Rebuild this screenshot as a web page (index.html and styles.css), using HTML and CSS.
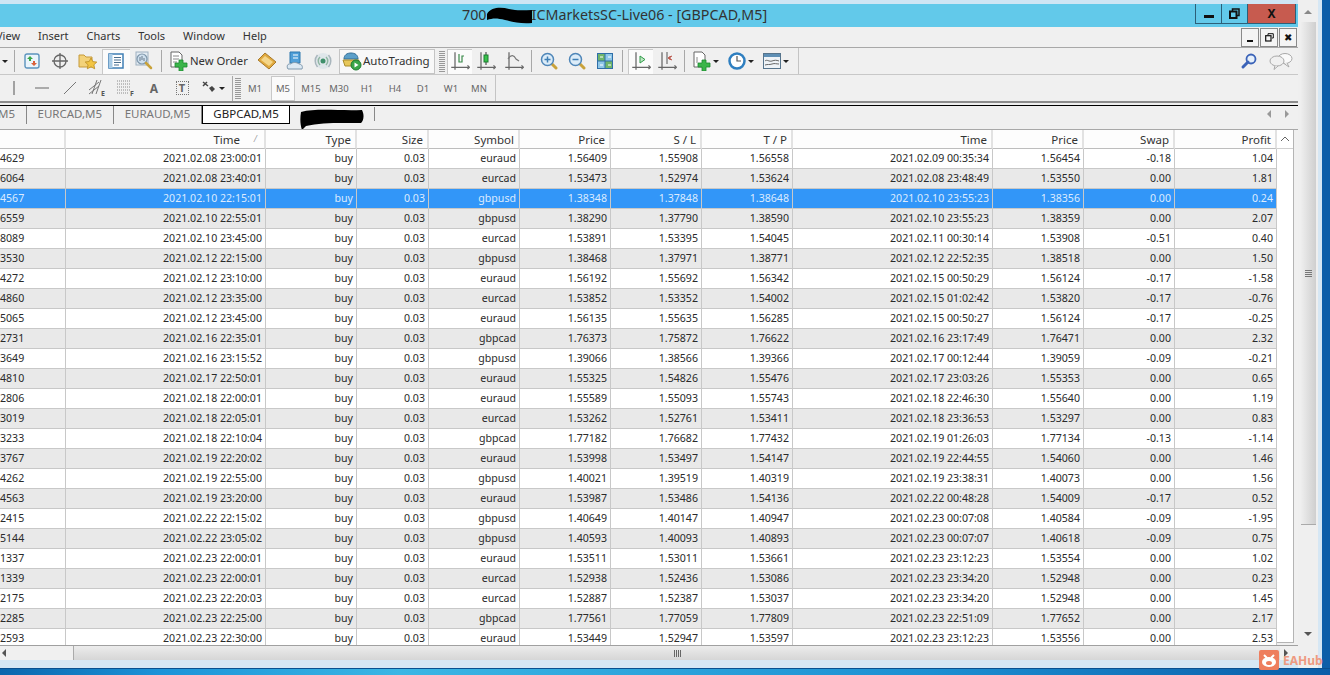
FILE: index.html
```html
<!DOCTYPE html>
<html>
<head>
    <meta charset="utf-8">
    <title>MetaTrader - GBPCAD,M5</title>
    <link rel="stylesheet" href="styles.css">
</head>

<body>
    <svg class="defs" width="0" height="0">
        <symbol id="axis" viewBox="0 0 16 16">
            <path d="M4 1v14M1 13h14" fill="none" stroke="#666" stroke-width="1"/>
            <path d="M14 11.500l1.500 1.500-1.500 1.500" fill="none" stroke="#666"/>
        </symbol>
        <symbol id="lens" viewBox="0 0 18 18">
            <path d="M11 11l5 5" stroke="#c9a23a" stroke-width="3" stroke-linecap="round"/>
            <circle cx="7.500" cy="7.500" r="6" fill="#dcecf8" stroke="#4f86b8" stroke-width="1.500"/>
        </symbol>
    </svg>

    <div class="screen">
        <div class="app">
            <div class="strip"></div>

            <div class="titlebar">
                <span class="title-text">700<svg class="title-blob" viewBox="0 0 45 18" width="45" height="18"><path d="M0 8C4 1 14 1 22 3S38 4 45 4V17C34 18 26 16 18 14S6 12 0 14Z" fill="#000"/></svg>ICMarketsSC-Live06 - [GBPCAD,M5]</span>
                <div class="winbtns">
                    <div class="winbtn"><i class="bar"></i></div>
                    <div class="winbtn"><svg width="11" height="11" viewBox="0 0 11 11"><path d="M3.500 3V1h6.500v6.500H8" fill="none" stroke="#111" stroke-width="1.500"/><rect x="1" y="3.500" width="6.500" height="6.500" fill="none" stroke="#111" stroke-width="2"/></svg></div>
                    <div class="winbtn winbtn--close">X</div>
                </div>
            </div>

            <div class="menu">
                <span class="menu__item menu__item--view">View</span>
                <span class="menu__item">Insert</span>
                <span class="menu__item">Charts</span>
                <span class="menu__item">Tools</span>
                <span class="menu__item">Window</span>
                <span class="menu__item">Help</span>
                <div class="mdi">
                    <div class="mdi__btn"><i class="mdi__min"></i></div>
                    <div class="mdi__btn"><svg width="9" height="9" viewBox="0 0 9 9"><path d="M3 2V.7h5.300V5H7" fill="none" stroke="#111"/><rect x=".7" y="2.700" width="5.300" height="5.300" fill="none" stroke="#111" stroke-width="1.200"/></svg></div>
                    <div class="mdi__btn mdi__btn--x">✖</div>
                </div>
            </div>

            <div class="toolbar">
                <i class="arrow arrow--first"></i>
                <i class="sep"></i>
                <div class="tool"><svg width="16" height="16" viewBox="0 0 16 16"><rect x="1" y="1" width="14" height="14" rx="2" fill="#eaf4fb" stroke="#5b93bd" stroke-width="1.400"/><path d="M6 3l3 3H7v2H5V6H3z" fill="#3aa648"/><path d="M10 13l-3-3h2V8h2v2h2z" fill="#d9613a"/></svg></div>
                <div class="tool"><svg width="20" height="20" viewBox="0 0 20 20"><circle cx="10" cy="10" r="6" fill="none" stroke="#666" stroke-width="1.300"/><path d="M10 2v16M2 10h16" stroke="#666" stroke-width="1.300"/></svg></div>
                <div class="tool"><svg width="20" height="18" viewBox="0 0 20 18"><path d="M1 3h5l2 2h6v10H1z" fill="#f3d27a" stroke="#c69a3a"/><path d="M13 6l1.800 3.600 4 .5-2.900 2.700.8 4-3.700-2-3.700 2 .8-4L7.200 10l4-.5z" fill="#f2c544" stroke="#b98a22" stroke-width=".8"/></svg></div>
                <div class="tool tool--on"><svg width="16" height="16" viewBox="0 0 16 16"><rect x="1" y="1" width="14" height="14" fill="#fff" stroke="#3f7fb5" stroke-width="1.500"/><path d="M1 1h3.500v14H1z" fill="#a8cbe6"/><path d="M6 4.500h7M6 7h7M6 9.500h7M6 12h5" stroke="#4a6f8f"/></svg></div>
                <div class="tool"><svg width="20" height="20" viewBox="0 0 20 20"><rect x="2" y="1" width="12" height="13" fill="#e3ebf2" stroke="#9db0c0"/><circle cx="8" cy="8" r="5" fill="#cfe0ee" stroke="#7f97ab" stroke-width="1.200"/><path d="M6 10V6M8 9V5M10 10V7" stroke="#66788a"/><path d="M12 12l5 5" stroke="#c9a23a" stroke-width="2.500" stroke-linecap="round"/></svg></div>
                <i class="sep"></i>
                <div class="order"><svg width="18" height="20" viewBox="0 0 18 20"><path d="M1 1h8l3 3v12H1z" fill="#fff" stroke="#666"/><path d="M3 5h6M3 8h6M3 11h4" stroke="#888"/><path d="M9 9h4v3h4v4h-4v4H9v-4H5v-4h4z" fill="#3bb54a" stroke="#1d8a30" stroke-width=".8"/></svg><span class="tool-label">New Order</span></div>
                <div class="tool"><svg width="20" height="18" viewBox="0 0 20 18"><path d="M1 8l7-7 11 9-7 7z" fill="#e0a93e" stroke="#a8792a"/><path d="M4 8l4-4 8 6-4 4z" fill="#f4d68a"/></svg></div>
                <div class="tool"><svg width="18" height="20" viewBox="0 0 18 20"><path d="M4 1h10v11H4z" fill="#4f9fd8" stroke="#2f78ae"/><path d="M7 4h5M7 7h5" stroke="#fff"/><path d="M2 18c-2-3 0-6 3-5 1-2 6-2 8 0 3 0 4 3 3 5z" fill="#dce9f3" stroke="#7f98ad"/></svg></div>
                <div class="tool"><svg width="18" height="18" viewBox="0 0 18 18"><circle cx="9" cy="9" r="8" fill="#dfe6ea"/><circle cx="9" cy="9" r="2.500" fill="#3f8f6a"/><path d="M6 5a5.500 5.500 0 0 0 0 8M12 5a5.500 5.500 0 0 1 0 8" fill="none" stroke="#8fb6a2" stroke-width="1.500"/><path d="M3.500 3a9 9 0 0 0 0 12M14.500 3a9 9 0 0 1 0 12" fill="none" stroke="#a9b6bd" stroke-width="1.500"/></svg></div>
                <div class="auto"><svg width="20" height="20" viewBox="0 0 20 20"><path d="M2 8c0-4 3-6 7-6s7 2 7 6z" fill="#5b9fc9" stroke="#366f96"/><path d="M1 9h16l-2 6H3z" fill="#e7c75a" stroke="#a98c2c"/><circle cx="14" cy="14" r="5" fill="#3aa648" stroke="#1d7a30"/><path d="M12.500 11.500l4 2.500-4 2.500z" fill="#fff"/></svg><span class="tool-label">AutoTrading</span></div>
                <i class="grip"></i>
                <div class="tool tool--on tool--chart"><svg width="20" height="20"><use href="#axis"/><path d="M9 3v8h3V5h2" fill="none" stroke="#3a8a4a" stroke-width="1.200"/></svg></div>
                <div class="tool"><svg width="20" height="20"><use href="#axis"/><path d="M10 1v13" stroke="#333"/><rect x="8" y="4" width="4" height="7" fill="#37c24a" stroke="#1d7a30"/></svg></div>
                <div class="tool"><svg width="20" height="20"><use href="#axis"/><path d="M4 8c3-5 6-4 8 0l3 2" fill="none" stroke="#777" stroke-width="1.200"/></svg></div>
                <i class="sep"></i>
                <div class="tool"><svg width="18" height="18"><use href="#lens"/><path d="M4.500 7.500h6M7.500 4.500v6" stroke="#3f7fb5" stroke-width="1.500"/></svg></div>
                <div class="tool"><svg width="18" height="18"><use href="#lens"/><path d="M4.500 7.500h6" stroke="#3f7fb5" stroke-width="1.500"/></svg></div>
                <div class="tool"><svg width="16" height="16" viewBox="0 0 16 16"><rect x="0" y="0" width="16" height="16" fill="#2f6ea8"/><rect x="1" y="1" width="6.500" height="6.500" fill="#6fb56a"/><rect x="8.500" y="1" width="6.500" height="6.500" fill="#8fc7e8"/><rect x="1" y="8.500" width="6.500" height="6.500" fill="#8fc7e8"/><rect x="8.500" y="8.500" width="6.500" height="6.500" fill="#6fb56a"/><path d="M3 4h3M11 4h3M3 12h3M11 12h3" stroke="#fff"/></svg></div>
                <i class="sep"></i>
                <div class="tool tool--on tool--chart"><svg width="20" height="20"><use href="#axis"/><path d="M9 5l5 3.500-5 3.500z" fill="#bfe8c4" stroke="#2f9a48"/></svg></div>
                <div class="tool"><svg width="20" height="20"><use href="#axis"/><path d="M10 1v12" stroke="#555"/><path d="M11 7l4-2M11 7l4 2M13 5v4" stroke="#b5473a"/></svg></div>
                <i class="sep"></i>
                <div class="tool tool--drop"><svg width="18" height="20" viewBox="0 0 18 20"><path d="M1 1h8l3 3v12H1z" fill="#fff" stroke="#666"/><path d="M4 6v6" stroke="#888"/><path d="M9 9h4v3h4v4h-4v4H9v-4H5v-4h4z" fill="#3bb54a" stroke="#1d8a30" stroke-width=".8"/></svg><i class="arrow"></i></div>
                <div class="tool tool--drop"><svg width="18" height="18" viewBox="0 0 18 18"><circle cx="9" cy="9" r="7.500" fill="#fff" stroke="#2f7fc0" stroke-width="2.500"/><path d="M9 4v5h4" fill="none" stroke="#555" stroke-width="1.200"/></svg><i class="arrow"></i></div>
                <div class="tool tool--drop"><svg width="18" height="16" viewBox="0 0 18 16"><rect x=".5" y=".5" width="17" height="15" fill="#eef3f7" stroke="#56748c"/><path d="M1 1h16v3H1z" fill="#5e8fb5"/><path d="M2 8c2-2 4 1 7 0s4-1 7 0M2 12c3-1 4 0 7-1s4 0 7 0" fill="none" stroke="#666"/></svg><i class="arrow"></i></div>
                <div class="toolbar__end"></div>
                <div class="finder">
                    <svg width="18" height="18" viewBox="0 0 18 18"><circle cx="11" cy="7" r="4.500" fill="#e6f0fb" stroke="#3b63b8" stroke-width="1.800"/><path d="M8 10l-5 5" stroke="#3b63b8" stroke-width="3" stroke-linecap="round"/></svg>
                    <svg width="24" height="18" viewBox="0 0 24 18"><ellipse cx="16" cy="6.500" rx="7" ry="5" fill="#fafafa" stroke="#a8a8a8"/><path d="M18 11l2 4-5-3.500" fill="#fafafa" stroke="#a8a8a8"/><ellipse cx="8" cy="9" rx="7" ry="5" fill="#f0f0f0" stroke="#a8a8a8"/><path d="M6 13.500l-1 4 4-3.500" fill="#f0f0f0" stroke="#a8a8a8"/></svg>
                </div>
            </div>

            <div class="toolbar toolbar--second">
                <div class="toolbar__left">
                    <div class="tool"><svg width="6" height="14"><path d="M3 0v14" stroke="#555"/></svg></div>
                    <div class="tool"><svg width="14" height="4"><path d="M0 2h14" stroke="#666"/></svg></div>
                    <div class="tool"><svg width="14" height="14"><path d="M1 13L13 1" stroke="#777"/></svg></div>
                    <div class="tool"><svg width="20" height="18" viewBox="0 0 20 18"><path d="M1 11L11 3M1 15L11 7M4 15L9 1M8 15L13 1" fill="none" stroke="#777"/><text x="13" y="17" class="tool__sub">E</text></svg></div>
                    <div class="tool"><svg width="20" height="18" viewBox="0 0 20 18"><path d="M1 2h13M1 5h13M1 8h13M1 11h13M1 14h11" stroke="#8a8a8a" stroke-dasharray="1 1"/><text x="14" y="17" class="tool__sub">F</text></svg></div>
                    <div class="tool tool--letter">A</div>
                    <div class="tool"><div class="textbox">T</div></div>
                    <div class="tool tool--drop"><svg width="16" height="14" viewBox="0 0 16 14"><path d="M2 1l5 4M6 1L2 5" stroke="#444" stroke-width="1.500"/><path d="M8 7l3-2 3 3-3 3z" fill="#444"/></svg><i class="arrow"></i></div>
                    <i class="sep sep--tall"></i>
                    <i class="grip grip--second"></i>
                    <div class="tool period">M1</div>
                    <div class="tool period period--on">M5</div>
                    <div class="tool period">M15</div>
                    <div class="tool period">M30</div>
                    <div class="tool period">H1</div>
                    <div class="tool period">H4</div>
                    <div class="tool period">D1</div>
                    <div class="tool period">W1</div>
                    <div class="tool period">MN</div>
                </div>
            </div>

            <div class="tabs">
                <span class="tab tab--cut">M5</span>
                <span class="tab">EURCAD,M5</span>
                <span class="tab">EURAUD,M5</span>
                <span class="tab tab--on">GBPCAD,M5</span>
                <svg class="tab-blob" width="64" height="22" viewBox="0 0 64 22"><path d="M1 4C16 0 40 3 62 2c3 6 1 12-1 13C44 15 22 14 6 18L2 22C0 16 0 10 1 4Z" fill="#000"/></svg>
                <i class="tab-end"></i>
                <div class="tabs__nav"><i class="nav-left"></i><i class="nav-right"></i></div>
            </div>

            <div class="history">
                <table class="trades">
                    <colgroup>
                        <col class="c-ticket"><col class="c-time"><col class="c-num"><col class="c-size"><col class="c-num"><col class="c-num"><col class="c-num"><col class="c-num"><col class="c-time"><col class="c-num"><col class="c-num"><col class="c-profit">
                    </colgroup>
                    <thead>
                        <tr><th></th><th class="sorted">Time<i class="sort">⁄</i></th><th>Type</th><th>Size</th><th>Symbol</th><th>Price</th><th>S / L</th><th>T / P</th><th>Time</th><th>Price</th><th>Swap</th><th>Profit</th></tr>
                    </thead>
                    <tbody>
                        <tr><td>4629</td><td>2021.02.08 23:00:01</td><td>buy</td><td>0.03</td><td>euraud</td><td>1.56409</td><td>1.55908</td><td>1.56558</td><td>2021.02.09 00:35:34</td><td>1.56454</td><td>-0.18</td><td>1.04</td></tr>
                        <tr><td>6064</td><td>2021.02.08 23:40:01</td><td>buy</td><td>0.03</td><td>eurcad</td><td>1.53473</td><td>1.52974</td><td>1.53624</td><td>2021.02.08 23:48:49</td><td>1.53550</td><td>0.00</td><td>1.81</td></tr>
                        <tr class="selected"><td>4567</td><td>2021.02.10 22:15:01</td><td>buy</td><td>0.03</td><td>gbpusd</td><td>1.38348</td><td>1.37848</td><td>1.38648</td><td>2021.02.10 23:55:23</td><td>1.38356</td><td>0.00</td><td>0.24</td></tr>
                        <tr><td>6559</td><td>2021.02.10 22:55:01</td><td>buy</td><td>0.03</td><td>gbpusd</td><td>1.38290</td><td>1.37790</td><td>1.38590</td><td>2021.02.10 23:55:23</td><td>1.38359</td><td>0.00</td><td>2.07</td></tr>
                        <tr><td>8089</td><td>2021.02.10 23:45:00</td><td>buy</td><td>0.03</td><td>eurcad</td><td>1.53891</td><td>1.53395</td><td>1.54045</td><td>2021.02.11 00:30:14</td><td>1.53908</td><td>-0.51</td><td>0.40</td></tr>
                        <tr><td>3530</td><td>2021.02.12 22:15:00</td><td>buy</td><td>0.03</td><td>gbpusd</td><td>1.38468</td><td>1.37971</td><td>1.38771</td><td>2021.02.12 22:52:35</td><td>1.38518</td><td>0.00</td><td>1.50</td></tr>
                        <tr><td>4272</td><td>2021.02.12 23:10:00</td><td>buy</td><td>0.03</td><td>euraud</td><td>1.56192</td><td>1.55692</td><td>1.56342</td><td>2021.02.15 00:50:29</td><td>1.56124</td><td>-0.17</td><td>-1.58</td></tr>
                        <tr><td>4860</td><td>2021.02.12 23:35:00</td><td>buy</td><td>0.03</td><td>eurcad</td><td>1.53852</td><td>1.53352</td><td>1.54002</td><td>2021.02.15 01:02:42</td><td>1.53820</td><td>-0.17</td><td>-0.76</td></tr>
                        <tr><td>5065</td><td>2021.02.12 23:45:00</td><td>buy</td><td>0.03</td><td>euraud</td><td>1.56135</td><td>1.55635</td><td>1.56285</td><td>2021.02.15 00:50:27</td><td>1.56124</td><td>-0.17</td><td>-0.25</td></tr>
                        <tr><td>2731</td><td>2021.02.16 22:35:01</td><td>buy</td><td>0.03</td><td>gbpcad</td><td>1.76373</td><td>1.75872</td><td>1.76622</td><td>2021.02.16 23:17:49</td><td>1.76471</td><td>0.00</td><td>2.32</td></tr>
                        <tr><td>3649</td><td>2021.02.16 23:15:52</td><td>buy</td><td>0.03</td><td>gbpusd</td><td>1.39066</td><td>1.38566</td><td>1.39366</td><td>2021.02.17 00:12:44</td><td>1.39059</td><td>-0.09</td><td>-0.21</td></tr>
                        <tr><td>4810</td><td>2021.02.17 22:50:01</td><td>buy</td><td>0.03</td><td>euraud</td><td>1.55325</td><td>1.54826</td><td>1.55476</td><td>2021.02.17 23:03:26</td><td>1.55353</td><td>0.00</td><td>0.65</td></tr>
                        <tr><td>2806</td><td>2021.02.18 22:00:01</td><td>buy</td><td>0.03</td><td>euraud</td><td>1.55589</td><td>1.55093</td><td>1.55743</td><td>2021.02.18 22:46:30</td><td>1.55640</td><td>0.00</td><td>1.19</td></tr>
                        <tr><td>3019</td><td>2021.02.18 22:05:01</td><td>buy</td><td>0.03</td><td>eurcad</td><td>1.53262</td><td>1.52761</td><td>1.53411</td><td>2021.02.18 23:36:53</td><td>1.53297</td><td>0.00</td><td>0.83</td></tr>
                        <tr><td>3233</td><td>2021.02.18 22:10:04</td><td>buy</td><td>0.03</td><td>gbpcad</td><td>1.77182</td><td>1.76682</td><td>1.77432</td><td>2021.02.19 01:26:03</td><td>1.77134</td><td>-0.13</td><td>-1.14</td></tr>
                        <tr><td>3767</td><td>2021.02.19 22:20:02</td><td>buy</td><td>0.03</td><td>euraud</td><td>1.53998</td><td>1.53497</td><td>1.54147</td><td>2021.02.19 22:44:55</td><td>1.54060</td><td>0.00</td><td>1.46</td></tr>
                        <tr><td>4262</td><td>2021.02.19 22:55:00</td><td>buy</td><td>0.03</td><td>gbpusd</td><td>1.40021</td><td>1.39519</td><td>1.40319</td><td>2021.02.19 23:38:31</td><td>1.40073</td><td>0.00</td><td>1.56</td></tr>
                        <tr><td>4563</td><td>2021.02.19 23:20:00</td><td>buy</td><td>0.03</td><td>euraud</td><td>1.53987</td><td>1.53486</td><td>1.54136</td><td>2021.02.22 00:48:28</td><td>1.54009</td><td>-0.17</td><td>0.52</td></tr>
                        <tr><td>2415</td><td>2021.02.22 22:15:02</td><td>buy</td><td>0.03</td><td>gbpusd</td><td>1.40649</td><td>1.40147</td><td>1.40947</td><td>2021.02.23 00:07:08</td><td>1.40584</td><td>-0.09</td><td>-1.95</td></tr>
                        <tr><td>5144</td><td>2021.02.22 23:05:02</td><td>buy</td><td>0.03</td><td>gbpusd</td><td>1.40593</td><td>1.40093</td><td>1.40893</td><td>2021.02.23 00:07:07</td><td>1.40618</td><td>-0.09</td><td>0.75</td></tr>
                        <tr><td>1337</td><td>2021.02.23 22:00:01</td><td>buy</td><td>0.03</td><td>euraud</td><td>1.53511</td><td>1.53011</td><td>1.53661</td><td>2021.02.23 23:12:23</td><td>1.53554</td><td>0.00</td><td>1.02</td></tr>
                        <tr><td>1339</td><td>2021.02.23 22:00:01</td><td>buy</td><td>0.03</td><td>eurcad</td><td>1.52938</td><td>1.52436</td><td>1.53086</td><td>2021.02.23 23:34:20</td><td>1.52948</td><td>0.00</td><td>0.23</td></tr>
                        <tr><td>2175</td><td>2021.02.23 22:20:03</td><td>buy</td><td>0.03</td><td>eurcad</td><td>1.52887</td><td>1.52387</td><td>1.53037</td><td>2021.02.23 23:34:20</td><td>1.52948</td><td>0.00</td><td>1.45</td></tr>
                        <tr><td>2285</td><td>2021.02.23 22:25:00</td><td>buy</td><td>0.03</td><td>gbpcad</td><td>1.77561</td><td>1.77059</td><td>1.77809</td><td>2021.02.23 22:51:09</td><td>1.77652</td><td>0.00</td><td>2.17</td></tr>
                        <tr><td>2593</td><td>2021.02.23 22:30:00</td><td>buy</td><td>0.03</td><td>euraud</td><td>1.53449</td><td>1.52947</td><td>1.53597</td><td>2021.02.23 23:12:23</td><td>1.53556</td><td>0.00</td><td>2.53</td></tr>
                    </tbody>
                </table>
                <div class="trades-side"><div class="trades-side__up"><svg width="10" height="6"><path d="M1 5l4-4 4 4" fill="none" stroke="#666"/></svg></div></div>
            </div>

            <div class="hscroll">
                <i class="nav-left nav-left--dark"></i>
                <div class="hscroll__thumb"><span class="hgrip"></span></div>
                <i class="nav-right nav-right--dark"></i>
            </div>
            <div class="app-foot"></div>
        </div>

        <div class="vscroll">
            <i class="vscroll__up"></i>
            <div class="vscroll__thumb"><span class="vgrip"></span></div>
            <i class="vscroll__down"></i>
        </div>
        <div class="edge"></div>
        <div class="edge edge--dark"></div>
    </div>
    <div class="desktop"></div>

    <div class="watermark">
        <svg width="20" height="20" viewBox="0 0 20 20"><rect width="20" height="20" rx="2" fill="#ee7e5e"/><ellipse cx="10" cy="12" rx="7" ry="5" fill="#fff"/><path d="M5 5l3 3M15 5l-3 3" stroke="#fff" stroke-width="2"/><ellipse cx="10" cy="13" rx="3" ry="2" fill="#ee7e5e"/></svg>
        <span>EAHub</span>
    </div>
</body>
</html>
```

FILE: styles.css
```css
* {
    box-sizing: border-box;
}

html, body {
    margin: 0;
    height: 675px;
    overflow: hidden;
}

body {
    position: relative;
    background-color: #f0f0f0;
    font-family: "Noto Sans", "Liberation Sans", sans-serif;
    font-size: 10.600px;
    color: #222;
}

i {
    display: block;
    font-style: normal;
}

.defs {
    position: absolute;
}

.screen {
    display: flex;
    height: 668px;
}

.desktop {
    height: 7px;
    border-top: 1px solid #0a4f8f;
    background: linear-gradient(90deg, #0b66ad, #1c93d8 12%, #3bb6e4 30%, #1c8fd2 70%, #0a5da8);
}

.app {
    width: 1298px;
    display: flex;
    flex-direction: column;
}

.strip {
    height: 4px;
    background-color: #cfe5f4;
}

/* title */
.titlebar {
    height: 23px;
    display: flex;
    background-color: #62c9ea;
}

.title-text {
    margin-left: 462px;
    font-size: 14.300px;
    line-height: 22px;
    color: #333;
    white-space: nowrap;
}

.title-blob {
    vertical-align: -4px;
}

.winbtns {
    margin-left: auto;
    margin-right: 2px;
    display: flex;
    height: 20px;
    border: 1px solid #2c5f78;
    border-top: 0;
}

.winbtn {
    width: 26px;
    display: flex;
    align-items: center;
    justify-content: center;
    border-right: 1px solid #2c5f78;
}

.winbtn--close {
    width: 47px;
    border-right: 0;
    background-color: #c75b4f;
    color: #111;
    font-weight: bold;
    font-size: 12px;
}

.bar {
    width: 10px;
    height: 3px;
    margin-top: 5px;
    background-color: #111;
}

/* menu */
.menu {
    height: 21px;
    display: flex;
    align-items: center;
    border-bottom: 1px solid #a8a8a8;
    font-size: 11px;
    color: #333;
}

.menu__item {
    margin-right: 18px;
    margin-top: -3px;
    white-space: nowrap;
}

.menu__item--view {
    margin-left: -4px;
}

.mdi {
    margin-left: auto;
    margin-right: 1px;
    display: flex;
    gap: 1px;
    height: 19px;
}

.mdi__btn {
    width: 18px;
    border: 1px solid #8a8a8a;
    display: flex;
    align-items: center;
    justify-content: center;
    background-color: #f4f4f4;
}

.mdi__btn--x {
    font-size: 10px;
    color: #111;
}

.mdi__min {
    width: 6px;
    height: 2px;
    margin-top: 7px;
    background-color: #111;
}

/* toolbars */
.toolbar {
    height: 27px;
    display: flex;
    align-items: center;
    border-bottom: 1px solid #c8c8c8;
}

.toolbar--second {
    height: 28px;
    border-bottom: 2px solid #8c8c8c;
    align-items: stretch;
}

.toolbar__left {
    width: 496px;
    display: flex;
    align-items: center;
    border-right: 1px solid #c4c4c4;
}

.toolbar__end {
    width: 1px;
    height: 26px;
    margin-left: 5px;
    background-color: #c4c4c4;
}

.tool-label {
    margin-top: -2px;
}

.tool {
    width: 28px;
    height: 25px;
    flex: none;
    display: flex;
    align-items: center;
    justify-content: center;
    color: #555;
}

.tool--on {
    background-color: #fbfbfb;
    box-shadow: inset 1px 1px 0 #c9c9c9;
}

.tool--chart {
    margin-left: 2px;
    width: 25px;
}

.tool--drop {
    width: 35px;
    gap: 2px;
    justify-content: flex-start;
    padding-left: 5px;
}

.tool--letter {
    font-size: 12px;
    font-weight: bold;
    color: #666;
}

.tool__sub {
    font-family: "Noto Sans", sans-serif;
    font-size: 7px;
    font-weight: bold;
    fill: #555;
}

.textbox {
    width: 13px;
    height: 14px;
    border: 1px dotted #777;
    font-weight: bold;
    font-size: 11px;
    line-height: 12px;
    text-align: center;
    color: #666;
}

.period {
    font-size: 9.500px;
    color: #666;
}

.period--on {
    width: 24px;
    margin: 0 2px;
    border: 1px solid #c8c8c8;
    background-color: #fafafa;
}

.sep {
    width: 1px;
    height: 22px;
    flex: none;
    margin: 0 3px;
    background-color: #a8a8a8;
}

.sep--tall {
    height: 25px;
    margin: 0 2px 0 1px;
}

.grip {
    width: 6px;
    height: 22px;
    flex: none;
    margin-left: 4px;
    background: repeating-linear-gradient(0deg, #999 0 1px, transparent 1px 2px);
}

.grip--second {
    margin-left: 0;
}

.arrow {
    width: 0;
    height: 0;
    flex: none;
    border-left: 3px solid transparent;
    border-right: 3px solid transparent;
    border-top: 3px solid #222;
}

.arrow--first {
    margin-left: 2px;
    margin-right: 3px;
}

.order {
    width: 88px;
    flex: none;
    display: flex;
    align-items: center;
    gap: 2px;
    padding-left: 5px;
    font-size: 11.300px;
    color: #333;
    white-space: nowrap;
}

.auto {
    width: 96px;
    height: 25px;
    flex: none;
    margin-left: 2px;
    display: flex;
    align-items: center;
    gap: 1px;
    padding-left: 2px;
    border: 1px solid #c4c4c4;
    background-color: #f8f8f8;
    font-size: 11.500px;
    color: #333;
    white-space: nowrap;
}

.finder {
    margin-left: auto;
    margin-right: 5px;
    display: flex;
    align-items: center;
    gap: 11px;
}

/* tabs */
.tabs {
    height: 24px;
    margin-top: 2px;
    display: flex;
    align-items: flex-start;
    border-top: 1px solid #000;
    font-size: 11.500px;
    color: #777;
}

.tab {
    height: 18px;
    line-height: 16px;
    padding: 0 11px 0 10.500px;
    white-space: nowrap;
    border-right: 1px solid #888;
}

.tab--cut {
    margin-left: -2px;
    padding: 0 11px 0 0;
}

.tab--on {
    padding: 0 10px;
    border: 1px solid #000;
    border-top: 0;
    background-color: #fff;
    color: #222;
}

.tab-blob {
    margin: 2px 0 0 10px;
    flex: none;
}

.tab-end {
    width: 1px;
    height: 14px;
    margin: 1px 0 0 10px;
    background-color: #888;
}

.tabs__nav {
    margin-left: auto;
    margin-right: 9px;
    margin-top: 4px;
    display: flex;
    gap: 14px;
}

.nav-left, .nav-right {
    width: 0;
    height: 0;
    border-top: 4px solid transparent;
    border-bottom: 4px solid transparent;
}

.nav-left {
    border-right: 4px solid #999;
}

.nav-right {
    border-left: 4px solid #999;
}

.nav-left--dark {
    border-right-color: #555;
    margin-left: 2px;
}

.nav-right--dark {
    border-left-color: #555;
    margin-left: 4px;
}

/* history table */
.history {
    height: 516px;
    display: flex;
    align-items: flex-start;
    border-top: 1px solid #a8a8a8;
    overflow: hidden;
    padding-right: 4px;
}

.trades {
    width: 1277px;
    flex: none;
    table-layout: fixed;
    border-collapse: separate;
    border-spacing: 0;
    background-color: #fff;
}

.c-ticket { width: 66px; }
.c-time { width: 200px; }
.c-num { width: 91px; }
.c-size { width: 72px; }
.c-profit { width: 102px; }

.trades th {
    height: 19px;
    padding: 0 4px 0 0;
    text-align: right;
    font-weight: normal;
    font-size: 11.500px;
    color: #333;
    background-color: #fdfdfd;
    border-right: 2px solid #e2e2e2;
    border-bottom: 1px solid #bdbdbd;
    white-space: nowrap;
    overflow: hidden;
}

.trades th.sorted {
    padding-right: 24px;
    position: relative;
}

.sort {
    position: absolute;
    right: 8px;
    top: 3px;
    font-size: 8px;
    color: #888;
}

.trades td {
    height: 20px;
    padding: 0 3px 1px 0;
    text-align: right;
    color: #2a2a2a;
    border-right: 1px solid #c8c8c8;
    border-bottom: 1px solid #c8c8c8;
    white-space: nowrap;
    overflow: hidden;
}

.trades td:first-child {
    text-align: left;
}

.trades tbody tr:nth-child(even) td {
    background-color: #e9e9e9;
}

.trades tbody tr.selected td {
    background-color: #3296f8;
    color: #dcebff;
}

.trades-side {
    width: 17px;
    height: 513px;
    flex: none;
    background-color: #fff;
    border-right: 1px solid #b4b4b4;
    border-bottom: 1px solid #b4b4b4;
}

.trades-side__up {
    height: 19px;
    display: flex;
    align-items: center;
    justify-content: center;
    border-bottom: 1px solid #d0d0d0;
}

/* scrollbars */
.hscroll {
    height: 15px;
    display: flex;
    align-items: center;
    padding-right: 4px;
    border-top: 1px solid #a0a0a0;
}

.hscroll__thumb {
    width: 1207px;
    height: 14px;
    margin-left: 67px;
    display: flex;
    align-items: center;
    justify-content: center;
    border-left: 1px solid #aaa;
    background: linear-gradient(#ececec, #d6d6d6);
}

.hgrip {
    width: 7px;
    height: 7px;
    background: repeating-linear-gradient(90deg, #666 0 1px, transparent 1px 2px);
}

.app-foot {
    flex: 1;
    background-color: #d6e7f4;
}

.vscroll {
    width: 20px;
    display: flex;
    flex-direction: column;
    align-items: center;
    padding-top: 10px;
    background-color: #efefef;
}

.vscroll__up {
    border-left: 4px solid transparent;
    border-right: 4px solid transparent;
    border-bottom: 4px solid #888;
}

.vscroll__thumb {
    width: 15px;
    height: 503px;
    margin-top: 8px;
    display: flex;
    align-items: center;
    justify-content: center;
    background: linear-gradient(90deg, #eee, #cfcfcf);
    border-bottom: 1px solid #aaa;
}

.vgrip {
    width: 7px;
    height: 7px;
    background: repeating-linear-gradient(0deg, #777 0 1px, transparent 1px 2px);
}

.vscroll__down {
    margin-top: 107px;
    border-left: 4px solid transparent;
    border-right: 4px solid transparent;
    border-top: 4px solid #555;
}

.edge {
    width: 4px;
    background-color: #d6e7f4;
}

.edge--dark {
    width: 8px;
    background-color: #0d5ea8;
}

/* watermark sits over the corner of the window */
.watermark {
    position: absolute;
    left: 1259px;
    top: 650px;
    display: flex;
    align-items: center;
    gap: 4px;
    font-size: 12px;
    font-weight: bold;
    color: #ee9a80;
}
```
